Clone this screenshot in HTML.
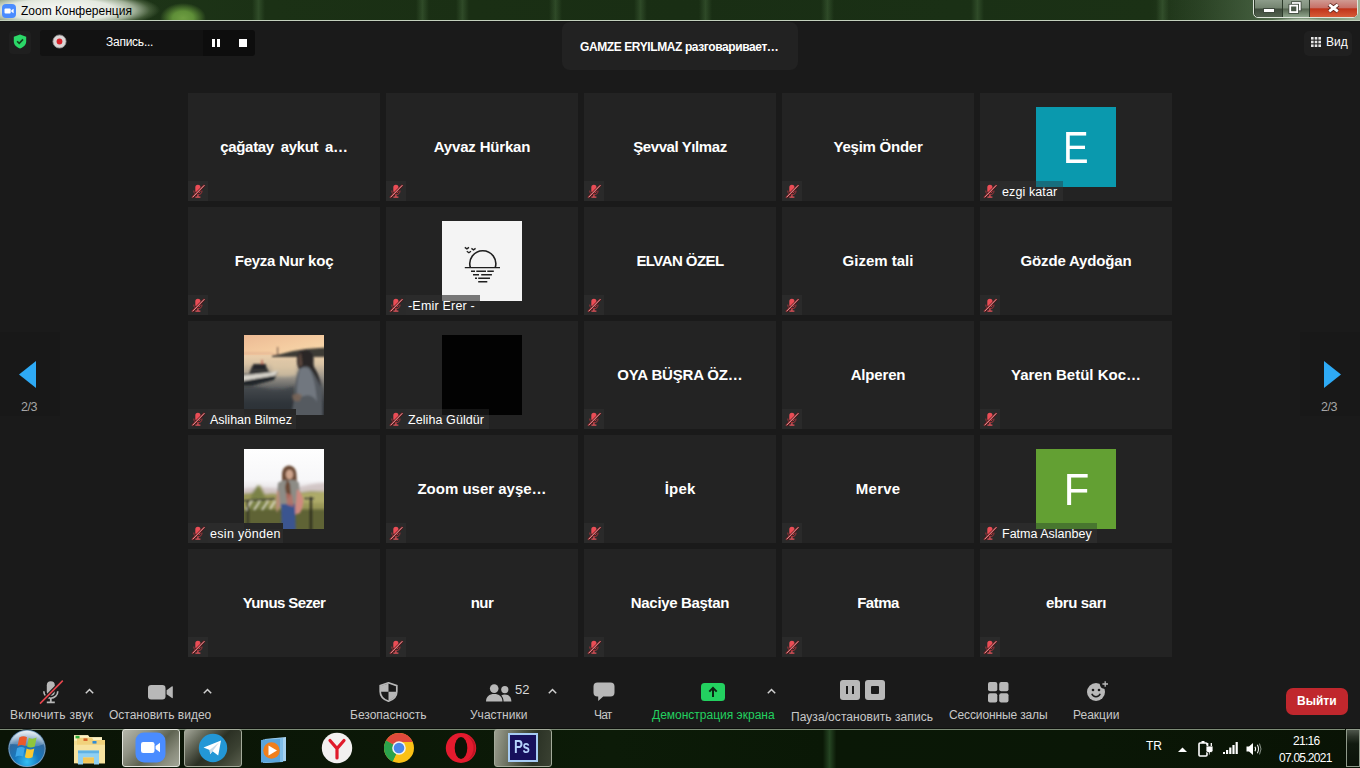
<!DOCTYPE html>
<html lang="ru">
<head>
<meta charset="utf-8">
<title>Zoom Конференция</title>
<style>
*{box-sizing:border-box;margin:0;padding:0}
html,body{width:1360px;height:768px;overflow:hidden;background:#1a1a1a;font-family:"Liberation Sans",sans-serif;color:#fff}
#root{position:relative;width:1360px;height:768px;overflow:hidden;background:#1a1a1a}
.abs{position:absolute}
/* title bar */
#titlebar{position:absolute;left:0;top:0;width:1360px;height:22px;overflow:hidden;background:linear-gradient(90deg,#20371a 0,#1d3417 10%,#1b3115 20%,#1a2f14 35%,#192e14 50%,#1a3015 70%,#1b3115 85%,#1d3417 100%)}
#titlebar:after{content:"";position:absolute;left:0;top:20px;width:1360px;height:1px;background:#c3d0bd}
#titlebar .btm{position:absolute;left:0;top:21px;width:1360px;height:1px;background:#141514}
.stk{position:absolute;top:0;width:13px;height:20px;margin-left:-3px;background:linear-gradient(90deg,rgba(90,130,80,0),rgba(90,130,80,.32),rgba(90,130,80,0))}
.wb{top:0;height:17px}
#ttext{position:absolute;left:21px;top:3px;font-size:12px;color:#000;line-height:16px;white-space:nowrap}
/* tiles */
.tile{position:absolute;width:192px;height:108px;background:#232323;overflow:hidden}
.tile .nm{position:absolute;left:0;top:0;width:192px;height:108px;line-height:108px;text-align:center;font-weight:bold;font-size:15px;color:#fff;white-space:nowrap}
.tile .mic{position:absolute;left:0;top:88px;width:20px;height:20px;background:#2a2a2a}
.tile .lbl{position:absolute;left:0;top:88px;height:20px;background:#2b2b2b;padding-left:22px;font-size:12.5px;line-height:22.500px;color:#fff;white-space:nowrap;overflow:hidden}
.tile .lbl i{position:absolute;top:0;height:6px;display:block}
.tile .lbl span{position:relative}
.tile .av{position:absolute;left:56px;top:14px;width:80px;height:80px;overflow:hidden}
.pg{font-size:12.5px;letter-spacing:-.4px;line-height:13px;color:#a6a6a6;white-space:nowrap}
/* toolbar */
.tb{position:absolute;font-size:12px;color:#c8c8c8;white-space:nowrap;line-height:14px;top:708px}
.chev{position:absolute;width:9px;height:6px}
/* taskbar */
#taskbar{position:absolute;left:0;top:728px;width:1360px;height:40px;overflow:hidden;background:linear-gradient(90deg,#0a1406 0,#0b1807 30%,#0c1b08 45%,#0a1806 60.500%,#254422 61%,#0a1806 61.500%,#0a1706 80%,#091305 100%)}
#taskbar:before{content:"";position:absolute;left:0;top:1px;width:1360px;height:1px;background:#7d8c77}
#taskbar:after{content:"";position:absolute;left:0;top:0;width:1360px;height:1px;background:#0d0f0c}
</style>
</head>
<body>
<div id="root">

<!-- TITLEBAR -->
<div id="titlebar">
<div class="abs" style="left:0;top:0;width:1360px;height:20px;background:linear-gradient(90deg,rgba(60,90,40,0) 0,rgba(60,90,40,0) 1150px,rgba(95,125,90,.22) 1200px,rgba(110,140,105,.42) 1250px,rgba(150,178,145,.75) 1320px,rgba(170,195,165,.9) 1360px)"></div>
<div class="stk" style="left:255px"></div><div class="stk" style="left:419px"></div><div class="stk" style="left:459px"></div><div class="stk" style="left:552px"></div><div class="stk" style="left:637px"></div><div class="stk" style="left:702px"></div><div class="stk" style="left:824px"></div><div class="stk" style="left:974px"></div><div class="stk" style="left:1159px"></div>
<div class="abs" style="left:160px;top:3px;width:46px;height:30px;background:radial-gradient(ellipse closest-side at 50% 50%,#6f9e42 0,#5f8f38 45%,rgba(50,85,35,0) 100%)"></div>
<div class="abs" style="left:-40px;top:-10px;width:200px;height:40px;background:radial-gradient(ellipse closest-side at 50% 50%,rgba(255,255,255,.97) 0,rgba(244,248,240,.92) 55%,rgba(215,228,205,.7) 75%,rgba(150,175,130,.3) 90%,rgba(120,150,100,0) 100%)"></div>
<svg class="abs" style="left:2px;top:4px" width="14" height="14" viewBox="0 0 14 14"><rect width="14" height="14" rx="4" fill="#4a8cff"/><rect x="2.500" y="4.500" width="6.200" height="5" rx="1" fill="#fff"/><path d="M9.300 6.300l2.300-1.600v4.600L9.300 7.700z" fill="#fff"/></svg>
<div id="ttext">Zoom Конференция</div>
<!-- window buttons -->
<div class="abs" style="left:1253px;top:-1px;width:105px;height:19px;border:1px solid #dfe6dc;border-radius:0 0 5px 5px;background:#2c3a2a"></div>
<div class="abs wb" style="left:1255px;width:27px;border-radius:0 0 0 4px;background:linear-gradient(#8d9c8a 0,#73836f 48%,#3f4c3d 52%,#53624f 100%)"></div>
<div class="abs wb" style="left:1283px;width:26px;background:linear-gradient(#93a290 0,#7d8d7a 48%,#55644f 52%,#8fa58c 100%)"></div>
<div class="abs wb" style="left:1310px;width:47px;border-radius:0 0 4px 0;background:linear-gradient(#d09a92 0,#c77168 45%,#c0341a 52%,#d65c38 100%)"></div>
<div class="abs" style="left:1263px;top:8px;width:12px;height:5px;background:#fff;border:1px solid #3f4a3e"></div>
<svg class="abs" style="left:1288px;top:1px" width="14" height="13" viewBox="0 0 14 13" fill="none"><rect x="4.800" y="2" width="7" height="6.500" stroke="#3c473b" stroke-width="3.400"/><rect x="4.800" y="2" width="7" height="6.500" stroke="#fff" stroke-width="1.800"/><rect x="2.200" y="4.600" width="7" height="6.500" fill="#73836f" stroke="#3c473b" stroke-width="3.400"/><rect x="2.200" y="4.600" width="7" height="6.500" fill="#4a5848" stroke="#fff" stroke-width="1.800"/></svg>
<svg class="abs" style="left:1326px;top:2px" width="15" height="12" viewBox="0 0 15 12"><path d="M3 2.500L12 9.500M12 2.500L3 9.500" stroke="#5a2018" stroke-width="4.400"/><path d="M3.200 2.700L11.800 9.300M11.800 2.700L3.200 9.300" stroke="#fff" stroke-width="2.800"/></svg>
<div class="abs" style="left:1270px;top:18px;width:60px;height:5px;background:radial-gradient(ellipse closest-side,rgba(235,245,232,.9),rgba(200,225,195,0))"></div>
<div class="btm"></div>
</div>

<!-- TOPBAR -->
<div id="topbar">
<!-- shield -->
<div class="abs" style="left:9px;top:31px;width:22px;height:23px;background:#1f1f1f;border-radius:4px"></div>
<svg class="abs" style="left:13px;top:34px" width="14" height="15" viewBox="0 0 14 15"><path d="M7 .4L13.200 2.800v4.400c0 3.400-2.500 6-6.200 7.300C3.300 13.200 .8 10.600 .8 7.200V2.800z" fill="#2bd868"/><path d="M4.100 7.300l2.100 2.100 3.800-4" fill="none" stroke="#15401f" stroke-width="1.600"/></svg>
<!-- recording box -->
<div class="abs" style="left:40px;top:30px;width:163px;height:26px;background:#121212;border-radius:3px 0 0 3px"></div>
<div class="abs" style="left:203px;top:30px;width:52px;height:26px;background:#0d0d0d;border-radius:0 3px 3px 0"></div>
<svg class="abs" style="left:52px;top:34px" width="15" height="15" viewBox="0 0 15 15"><circle cx="7.500" cy="7.500" r="6.600" fill="#d9d6d6"/><circle cx="7.500" cy="7.500" r="6.600" fill="none" stroke="#8e8a8a" stroke-width=".8"/><circle cx="7.500" cy="7.500" r="2.900" fill="#d8222a"/></svg>
<div class="abs" id="rectxt" style="left:106px;top:35px;letter-spacing:-.25px;font-size:12px;line-height:14px;color:#fff;white-space:nowrap">Запись...</div>
<div class="abs" style="left:212px;top:39px;width:3px;height:8px;background:#fff"></div>
<div class="abs" style="left:217px;top:39px;width:3px;height:8px;background:#fff"></div>
<div class="abs" style="left:239px;top:39px;width:8px;height:8px;background:#fff"></div>
<!-- speaker -->
<div class="abs" style="left:562px;top:22px;width:236px;height:48px;background:#222;border-radius:8px"></div>
<div class="abs" id="spk" style="left:580px;top:40px;letter-spacing:-.4px;font-size:12px;font-weight:bold;line-height:14px;color:#fff;white-space:nowrap">GAMZE ERYILMAZ разговаривает…</div>
<!-- view -->
<div class="abs" style="left:1304px;top:31px;width:48px;height:25px;background:#202020;border-radius:5px"></div>
<svg class="abs" style="left:1311px;top:37px" width="10" height="10" viewBox="0 0 10 10" fill="#e6e6e6"><rect x="0" y="0" width="2.600" height="2.600"/><rect x="3.700" y="0" width="2.600" height="2.600"/><rect x="7.400" y="0" width="2.600" height="2.600"/><rect x="0" y="3.700" width="2.600" height="2.600"/><rect x="3.700" y="3.700" width="2.600" height="2.600"/><rect x="7.400" y="3.700" width="2.600" height="2.600"/><rect x="0" y="7.400" width="2.600" height="2.600"/><rect x="3.700" y="7.400" width="2.600" height="2.600"/><rect x="7.400" y="7.400" width="2.600" height="2.600"/></svg>
<div class="abs" id="vid" style="left:1326px;top:35px;font-size:12px;line-height:14px;color:#fff;white-space:nowrap">Вид</div>
<!-- page arrows -->
<div class="abs" style="left:0;top:332px;width:60px;height:84px;background:#181818"></div>
<svg class="abs" style="left:19px;top:361px" width="17" height="27" viewBox="0 0 17 27"><path d="M0 13.500L17 0V27z" fill="#2eaaf5"/></svg>
<div class="abs pg" style="left:21px;top:401px">2/3</div>
<div class="abs" style="left:1300px;top:332px;width:60px;height:84px;background:#181818"></div>
<svg class="abs" style="left:1324px;top:361px" width="17" height="27" viewBox="0 0 17 27"><path d="M17 13.500L0 0V27z" fill="#2eaaf5"/></svg>
<div class="abs pg" style="left:1321px;top:401px">2/3</div>
</div>

<!-- GRID -->
<div id="grid">
<div class="tile" style="left:188px;top:93px"><div class="nm" style="letter-spacing:-.33px;word-spacing:3px">çağatay aykut a…</div><svg class="mic" viewBox="0 0 20 20"><rect x="7.300" y="3.800" width="5.200" height="8.400" rx="2.600" fill="#ea4d56"/><path d="M5.800 9.600a4.100 4.100 0 0 0 8.200 0" fill="none" stroke="#a8353c" stroke-width="1"/><path d="M9.900 13.700v2M7.400 16.100h5" stroke="#e2525a" stroke-width="1.200" fill="none"/><path d="M4.200 16.600L16.600 4" stroke="#6a1216" stroke-width="2.300"/><path d="M4.400 16.400L16.400 4.200" stroke="#f2aeb1" stroke-width="1"/></svg></div>
<div class="tile" style="left:386px;top:93px"><div class="nm" style="letter-spacing:-0.18px;padding-left:-0.18px">Ayvaz Hürkan</div><svg class="mic" viewBox="0 0 20 20"><rect x="7.300" y="3.800" width="5.200" height="8.400" rx="2.600" fill="#ea4d56"/><path d="M5.800 9.600a4.100 4.100 0 0 0 8.200 0" fill="none" stroke="#a8353c" stroke-width="1"/><path d="M9.900 13.700v2M7.400 16.100h5" stroke="#e2525a" stroke-width="1.200" fill="none"/><path d="M4.200 16.600L16.600 4" stroke="#6a1216" stroke-width="2.300"/><path d="M4.400 16.400L16.400 4.200" stroke="#f2aeb1" stroke-width="1"/></svg></div>
<div class="tile" style="left:584px;top:93px"><div class="nm" style="letter-spacing:-0.42px;padding-left:-0.42px">Şevval Yılmaz</div><svg class="mic" viewBox="0 0 20 20"><rect x="7.300" y="3.800" width="5.200" height="8.400" rx="2.600" fill="#ea4d56"/><path d="M5.800 9.600a4.100 4.100 0 0 0 8.200 0" fill="none" stroke="#a8353c" stroke-width="1"/><path d="M9.900 13.700v2M7.400 16.100h5" stroke="#e2525a" stroke-width="1.200" fill="none"/><path d="M4.200 16.600L16.600 4" stroke="#6a1216" stroke-width="2.300"/><path d="M4.400 16.400L16.400 4.200" stroke="#f2aeb1" stroke-width="1"/></svg></div>
<div class="tile" style="left:782px;top:93px"><div class="nm" style="letter-spacing:-0.25px;padding-left:-0.25px">Yeşim Önder</div><svg class="mic" viewBox="0 0 20 20"><rect x="7.300" y="3.800" width="5.200" height="8.400" rx="2.600" fill="#ea4d56"/><path d="M5.800 9.600a4.100 4.100 0 0 0 8.200 0" fill="none" stroke="#a8353c" stroke-width="1"/><path d="M9.900 13.700v2M7.400 16.100h5" stroke="#e2525a" stroke-width="1.200" fill="none"/><path d="M4.200 16.600L16.600 4" stroke="#6a1216" stroke-width="2.300"/><path d="M4.400 16.400L16.400 4.200" stroke="#f2aeb1" stroke-width="1"/></svg></div>
<div class="tile" style="left:980px;top:93px"><div class="av avE"><div style="width:80px;height:80px;background:#0a99ae;color:#fff;font-size:44px;line-height:82px;text-align:center"><span style="display:inline-block;transform:scaleX(.87)">E</span></div></div><div class="lbl" style="width:83px;letter-spacing:0.1px"><i style="left:56px;width:27px;background:#176e7d"></i><span>ezgi katar</span></div><svg class="mic" viewBox="0 0 20 20"><rect x="7.300" y="3.800" width="5.200" height="8.400" rx="2.600" fill="#ea4d56"/><path d="M5.800 9.600a4.100 4.100 0 0 0 8.200 0" fill="none" stroke="#a8353c" stroke-width="1"/><path d="M9.900 13.700v2M7.400 16.100h5" stroke="#e2525a" stroke-width="1.200" fill="none"/><path d="M4.200 16.600L16.600 4" stroke="#6a1216" stroke-width="2.300"/><path d="M4.400 16.400L16.400 4.200" stroke="#f2aeb1" stroke-width="1"/></svg></div>
<div class="tile" style="left:188px;top:207px"><div class="nm" style="letter-spacing:-0.25px;padding-left:-0.25px">Feyza Nur koç</div><svg class="mic" viewBox="0 0 20 20"><rect x="7.300" y="3.800" width="5.200" height="8.400" rx="2.600" fill="#ea4d56"/><path d="M5.800 9.600a4.100 4.100 0 0 0 8.200 0" fill="none" stroke="#a8353c" stroke-width="1"/><path d="M9.900 13.700v2M7.400 16.100h5" stroke="#e2525a" stroke-width="1.200" fill="none"/><path d="M4.200 16.600L16.600 4" stroke="#6a1216" stroke-width="2.300"/><path d="M4.400 16.400L16.400 4.200" stroke="#f2aeb1" stroke-width="1"/></svg></div>
<div class="tile" style="left:386px;top:207px"><div class="av avSUN"><svg width="80" height="80" viewBox="0 0 80 80"><rect width="80" height="80" fill="#f4f4f4"/><g fill="none" stroke="#1f1f1f" stroke-width="1.600"><path d="M28.400 46.600A13 13 0 1 1 53.200 46.600"/><path d="M22.800 46.600h35.200" stroke-width="1.400"/><path d="M29 50.200h4M34.300 50.200h9.700M45.300 50.200h6.500M31 53.800h6M39.200 53.800h10.700M33 57.200h2M36.200 57.200h11.800M36.200 60.700h9.100" stroke-width="1.400"/><path d="M22.800 26.400l2.100 1.500 2.100-1.500M29.400 27.400l2.100 1.500 2.100-1.500M24.800 30.300l2.100 1.500 2.100-1.500" stroke-width="1.300"/></g></svg></div><div class="lbl" style="width:94px;letter-spacing:0.2px"><i style="left:56px;width:38px;background:#777777"></i><span>-Emir Erer -</span></div><svg class="mic" viewBox="0 0 20 20"><rect x="7.300" y="3.800" width="5.200" height="8.400" rx="2.600" fill="#ea4d56"/><path d="M5.800 9.600a4.100 4.100 0 0 0 8.200 0" fill="none" stroke="#a8353c" stroke-width="1"/><path d="M9.900 13.700v2M7.400 16.100h5" stroke="#e2525a" stroke-width="1.200" fill="none"/><path d="M4.200 16.600L16.600 4" stroke="#6a1216" stroke-width="2.300"/><path d="M4.400 16.400L16.400 4.200" stroke="#f2aeb1" stroke-width="1"/></svg></div>
<div class="tile" style="left:584px;top:207px"><div class="nm" style="letter-spacing:-0.56px;padding-left:-0.56px">ELVAN ÖZEL</div><svg class="mic" viewBox="0 0 20 20"><rect x="7.300" y="3.800" width="5.200" height="8.400" rx="2.600" fill="#ea4d56"/><path d="M5.800 9.600a4.100 4.100 0 0 0 8.200 0" fill="none" stroke="#a8353c" stroke-width="1"/><path d="M9.900 13.700v2M7.400 16.100h5" stroke="#e2525a" stroke-width="1.200" fill="none"/><path d="M4.200 16.600L16.600 4" stroke="#6a1216" stroke-width="2.300"/><path d="M4.400 16.400L16.400 4.200" stroke="#f2aeb1" stroke-width="1"/></svg></div>
<div class="tile" style="left:782px;top:207px"><div class="nm">Gizem tali</div><svg class="mic" viewBox="0 0 20 20"><rect x="7.300" y="3.800" width="5.200" height="8.400" rx="2.600" fill="#ea4d56"/><path d="M5.800 9.600a4.100 4.100 0 0 0 8.200 0" fill="none" stroke="#a8353c" stroke-width="1"/><path d="M9.900 13.700v2M7.400 16.100h5" stroke="#e2525a" stroke-width="1.200" fill="none"/><path d="M4.200 16.600L16.600 4" stroke="#6a1216" stroke-width="2.300"/><path d="M4.400 16.400L16.400 4.200" stroke="#f2aeb1" stroke-width="1"/></svg></div>
<div class="tile" style="left:980px;top:207px"><div class="nm" style="letter-spacing:-0.17px;padding-left:-0.17px">Gözde Aydoğan</div><svg class="mic" viewBox="0 0 20 20"><rect x="7.300" y="3.800" width="5.200" height="8.400" rx="2.600" fill="#ea4d56"/><path d="M5.800 9.600a4.100 4.100 0 0 0 8.200 0" fill="none" stroke="#a8353c" stroke-width="1"/><path d="M9.900 13.700v2M7.400 16.100h5" stroke="#e2525a" stroke-width="1.200" fill="none"/><path d="M4.200 16.600L16.600 4" stroke="#6a1216" stroke-width="2.300"/><path d="M4.400 16.400L16.400 4.200" stroke="#f2aeb1" stroke-width="1"/></svg></div>
<div class="tile" style="left:188px;top:321px"><div class="av avP1"><svg width="80" height="80" viewBox="0 0 80 80"><defs><linearGradient id="p1s" x1="0" y1="0" x2="1" y2="1"><stop offset="0" stop-color="#ecba94"/><stop offset=".5" stop-color="#f4cba0"/><stop offset="1" stop-color="#f8dcae"/></linearGradient><linearGradient id="p1w" x1="0" y1="0" x2="0" y2="1"><stop offset="0" stop-color="#ecd0ac"/><stop offset=".15" stop-color="#d8c2a4"/><stop offset=".36" stop-color="#9b958a"/><stop offset=".56" stop-color="#5b5d5f"/><stop offset=".8" stop-color="#34383d"/><stop offset="1" stop-color="#2a2e32"/></linearGradient><filter id="b1" x="-20%" y="-20%" width="140%" height="140%"><feGaussianBlur stdDeviation=".8"/></filter><filter id="b2" x="-20%" y="-20%" width="140%" height="140%"><feGaussianBlur stdDeviation="1.600"/></filter></defs>
<rect width="80" height="21" fill="url(#p1s)"/><rect y="20" width="80" height="60" fill="url(#p1w)"/>
<g filter="url(#b2)"><path d="M-10 52q14-3 30 1t30-2v40H-10z" fill="#2e3338" opacity=".5"/><path d="M28 28q12 2 24 0v12q-12 3-24 0z" fill="#e4cca8" opacity=".55"/></g>
<g filter="url(#b1)"><path d="M-8 17.500h34l10 1.800H-8z" fill="#d9a58a" opacity=".7"/><path d="M28 20.500l8-1.200 12-3 14-2.300 28-2v10H28z" fill="#3d3a36"/><rect x="33" y="12" width="1.200" height="8.500" fill="#7a5f50"/>
<path d="M-8 39h13l3-8h14l3 6h9l-3 5-24 5H-8z" fill="#343536"/><path d="M-8 41l34-3.500 8-2-2.500 5-23.500 5.500H-8z" fill="#d6d2c9"/><path d="M9 29h13v5H9z" fill="#262729"/><path d="M-8 47l40-6.500-2 4.500-22 6H-8z" fill="#23272b"/><rect x="17.500" y="25" width="1.200" height="4" fill="#b0443a"/>
<path d="M53 24c0-6 4-9 8.500-9s8 3 8 9c0 3-.5 5 .5 8 4 6 7 13 8 22l1 36H48c-1-12 1-20 3-30 0-8 .5-16 4-26-1.500-3-2-6-2-10z" fill="#555a61"/><path d="M53 24c0-6 4-9 8.500-9s8 3 8 9c0 3-.5 5 .5 8 3 5 6 11 7 20-4-8-7-14-12-20-4-2-7 1-10 2-1.500-3-2-6-2-10z" fill="#2a2725"/><path d="M56 34c3-2 7-2 10 1 4 8 6 18 7 32-3-6-8-8-13-6-4 2-6 0-7-4 0-9 1-15 3-23z" fill="#7d838b" opacity=".7"/><path d="M54.500 24c0-3 1-5 2.500-6l1.500 12-3 2q-1-4-1-8z" fill="#5c463c"/><path d="M48 60q6-3 10 0l-2 6q-4 1-7-1z" fill="#7d6658" opacity=".8"/></g></svg></div><div class="lbl" style="width:108px;letter-spacing:0px"><i style="left:56px;width:52px;background:rgba(38,38,38,.72)"></i><span>Aslihan Bilmez</span></div><svg class="mic" viewBox="0 0 20 20"><rect x="7.300" y="3.800" width="5.200" height="8.400" rx="2.600" fill="#ea4d56"/><path d="M5.800 9.600a4.100 4.100 0 0 0 8.200 0" fill="none" stroke="#a8353c" stroke-width="1"/><path d="M9.900 13.700v2M7.400 16.100h5" stroke="#e2525a" stroke-width="1.200" fill="none"/><path d="M4.200 16.600L16.600 4" stroke="#6a1216" stroke-width="2.300"/><path d="M4.400 16.400L16.400 4.200" stroke="#f2aeb1" stroke-width="1"/></svg></div>
<div class="tile" style="left:386px;top:321px"><div class="av avBLK"><div style="width:80px;height:80px;background:#020202"></div></div><div class="lbl" style="width:103px;letter-spacing:0.08px"><i style="left:56px;width:47px;background:#141414"></i><span>Zeliha Güldür</span></div><svg class="mic" viewBox="0 0 20 20"><rect x="7.300" y="3.800" width="5.200" height="8.400" rx="2.600" fill="#ea4d56"/><path d="M5.800 9.600a4.100 4.100 0 0 0 8.200 0" fill="none" stroke="#a8353c" stroke-width="1"/><path d="M9.900 13.700v2M7.400 16.100h5" stroke="#e2525a" stroke-width="1.200" fill="none"/><path d="M4.200 16.600L16.600 4" stroke="#6a1216" stroke-width="2.300"/><path d="M4.400 16.400L16.400 4.200" stroke="#f2aeb1" stroke-width="1"/></svg></div>
<div class="tile" style="left:584px;top:321px"><div class="nm" style="letter-spacing:-0.17px;padding-left:-0.17px">OYA BÜŞRA ÖZ…</div><svg class="mic" viewBox="0 0 20 20"><rect x="7.300" y="3.800" width="5.200" height="8.400" rx="2.600" fill="#ea4d56"/><path d="M5.800 9.600a4.100 4.100 0 0 0 8.200 0" fill="none" stroke="#a8353c" stroke-width="1"/><path d="M9.900 13.700v2M7.400 16.100h5" stroke="#e2525a" stroke-width="1.200" fill="none"/><path d="M4.200 16.600L16.600 4" stroke="#6a1216" stroke-width="2.300"/><path d="M4.400 16.400L16.400 4.200" stroke="#f2aeb1" stroke-width="1"/></svg></div>
<div class="tile" style="left:782px;top:321px"><div class="nm" style="letter-spacing:-0.17px;padding-left:-0.17px">Alperen</div><svg class="mic" viewBox="0 0 20 20"><rect x="7.300" y="3.800" width="5.200" height="8.400" rx="2.600" fill="#ea4d56"/><path d="M5.800 9.600a4.100 4.100 0 0 0 8.200 0" fill="none" stroke="#a8353c" stroke-width="1"/><path d="M9.900 13.700v2M7.400 16.100h5" stroke="#e2525a" stroke-width="1.200" fill="none"/><path d="M4.200 16.600L16.600 4" stroke="#6a1216" stroke-width="2.300"/><path d="M4.400 16.400L16.400 4.200" stroke="#f2aeb1" stroke-width="1"/></svg></div>
<div class="tile" style="left:980px;top:321px"><div class="nm">Yaren Betül Koc…</div><svg class="mic" viewBox="0 0 20 20"><rect x="7.300" y="3.800" width="5.200" height="8.400" rx="2.600" fill="#ea4d56"/><path d="M5.800 9.600a4.100 4.100 0 0 0 8.200 0" fill="none" stroke="#a8353c" stroke-width="1"/><path d="M9.900 13.700v2M7.400 16.100h5" stroke="#e2525a" stroke-width="1.200" fill="none"/><path d="M4.200 16.600L16.600 4" stroke="#6a1216" stroke-width="2.300"/><path d="M4.400 16.400L16.400 4.200" stroke="#f2aeb1" stroke-width="1"/></svg></div>
<div class="tile" style="left:188px;top:435px"><div class="av avP2"><svg width="80" height="80" viewBox="0 0 80 80"><defs><linearGradient id="p2s" x1="0" y1="0" x2="0" y2="1"><stop offset="0" stop-color="#fefefe"/><stop offset=".38" stop-color="#f7f7f9"/><stop offset=".5" stop-color="#e8e4e6"/></linearGradient><filter id="c1" x="-20%" y="-20%" width="140%" height="140%"><feGaussianBlur stdDeviation=".9"/></filter><filter id="c2" x="-20%" y="-20%" width="140%" height="140%"><feGaussianBlur stdDeviation="1.800"/></filter></defs>
<rect width="80" height="80" fill="url(#p2s)"/>
<g filter="url(#c2)"><path d="M-10 42q18-5 36-3t34-2 30-3v20H-10z" fill="#d2c6c6"/><path d="M-10 47q10-4 22-3l4-8 5 9q10-2 16 1l30-4 23 1v50H-10z" fill="#9a9858"/><path d="M-10 60h100v30H-10z" fill="#5f6436"/><path d="M52 45l38-3v12H52z" fill="#aeab69"/><path d="M8 44l6-8 6 10 6 14H4z" fill="#7a8246"/></g>
<g filter="url(#c1)"><path d="M-5 52l36-2" stroke="#3a3a34" stroke-width="1.400"/><path d="M2 61l6-9M10 61l6-9M18 61l6-9M26 60l5-8" stroke="#e9e6dc" stroke-width="1.700" opacity=".85"/><rect x="3" y="52" width="1.600" height="24" fill="#2c2c28"/><path d="M60 49.500h10" stroke="#3a3a34" stroke-width="1.300"/><rect x="66" y="48" width="1.800" height="40" fill="#1f1f1d"/>
<path d="M38 26c0-6 3-9.500 7-9.500s7.500 3.500 7.500 9.500c0 5 1 9 1 14l-4 8-8-4-3-6c-.5-4-.5-8-.5-12z" fill="#6b4a36"/><ellipse cx="45.500" cy="25.500" rx="3.600" ry="4.800" fill="#cfa58d"/><path d="M34 34q4-3 8-3l8 0q3 0 5 3l1 14-2 10H35l-2-12z" fill="#8d8c86"/><path d="M43 30l3 5 1 12-4 3-2-12z" fill="#6b4a36"/><path d="M53 40q5 4 6 10t-3 14l-6 2 2-12z" fill="#cf8a80"/><path d="M33 42l2 0 1 14-3 8q-2-8 0-22z" fill="#b98d78"/><path d="M37 55h14l1 35H38z" fill="#3b5590"/><path d="M42 44l6 2 2 12-7-2z" fill="#b86e64" opacity=".8"/></g></svg></div><div class="lbl" style="width:95px;letter-spacing:0.3px"><i style="left:56px;width:39px;background:rgba(38,38,38,.72)"></i><span>esin yönden</span></div><svg class="mic" viewBox="0 0 20 20"><rect x="7.300" y="3.800" width="5.200" height="8.400" rx="2.600" fill="#ea4d56"/><path d="M5.800 9.600a4.100 4.100 0 0 0 8.200 0" fill="none" stroke="#a8353c" stroke-width="1"/><path d="M9.900 13.700v2M7.400 16.100h5" stroke="#e2525a" stroke-width="1.200" fill="none"/><path d="M4.200 16.600L16.600 4" stroke="#6a1216" stroke-width="2.300"/><path d="M4.400 16.400L16.400 4.200" stroke="#f2aeb1" stroke-width="1"/></svg></div>
<div class="tile" style="left:386px;top:435px"><div class="nm">Zoom user ayşe…</div><svg class="mic" viewBox="0 0 20 20"><rect x="7.300" y="3.800" width="5.200" height="8.400" rx="2.600" fill="#ea4d56"/><path d="M5.800 9.600a4.100 4.100 0 0 0 8.200 0" fill="none" stroke="#a8353c" stroke-width="1"/><path d="M9.900 13.700v2M7.400 16.100h5" stroke="#e2525a" stroke-width="1.200" fill="none"/><path d="M4.200 16.600L16.600 4" stroke="#6a1216" stroke-width="2.300"/><path d="M4.400 16.400L16.400 4.200" stroke="#f2aeb1" stroke-width="1"/></svg></div>
<div class="tile" style="left:584px;top:435px"><div class="nm" style="letter-spacing:0.20px;padding-left:0.20px">İpek</div><svg class="mic" viewBox="0 0 20 20"><rect x="7.300" y="3.800" width="5.200" height="8.400" rx="2.600" fill="#ea4d56"/><path d="M5.800 9.600a4.100 4.100 0 0 0 8.200 0" fill="none" stroke="#a8353c" stroke-width="1"/><path d="M9.900 13.700v2M7.400 16.100h5" stroke="#e2525a" stroke-width="1.200" fill="none"/><path d="M4.200 16.600L16.600 4" stroke="#6a1216" stroke-width="2.300"/><path d="M4.400 16.400L16.400 4.200" stroke="#f2aeb1" stroke-width="1"/></svg></div>
<div class="tile" style="left:782px;top:435px"><div class="nm" style="letter-spacing:0.25px;padding-left:0.25px">Merve</div><svg class="mic" viewBox="0 0 20 20"><rect x="7.300" y="3.800" width="5.200" height="8.400" rx="2.600" fill="#ea4d56"/><path d="M5.800 9.600a4.100 4.100 0 0 0 8.200 0" fill="none" stroke="#a8353c" stroke-width="1"/><path d="M9.900 13.700v2M7.400 16.100h5" stroke="#e2525a" stroke-width="1.200" fill="none"/><path d="M4.200 16.600L16.600 4" stroke="#6a1216" stroke-width="2.300"/><path d="M4.400 16.400L16.400 4.200" stroke="#f2aeb1" stroke-width="1"/></svg></div>
<div class="tile" style="left:980px;top:435px"><div class="av avF"><div style="width:80px;height:80px;background:#63a033;color:#fff;font-size:44px;line-height:82px;text-align:center"><span style="display:inline-block;transform:scaleX(.95)">F</span></div></div><div class="lbl" style="width:117px;letter-spacing:0px"><i style="left:56px;width:61px;background:#48762f"></i><span>Fatma Aslanbey</span></div><svg class="mic" viewBox="0 0 20 20"><rect x="7.300" y="3.800" width="5.200" height="8.400" rx="2.600" fill="#ea4d56"/><path d="M5.800 9.600a4.100 4.100 0 0 0 8.200 0" fill="none" stroke="#a8353c" stroke-width="1"/><path d="M9.900 13.700v2M7.400 16.100h5" stroke="#e2525a" stroke-width="1.200" fill="none"/><path d="M4.200 16.600L16.600 4" stroke="#6a1216" stroke-width="2.300"/><path d="M4.400 16.400L16.400 4.200" stroke="#f2aeb1" stroke-width="1"/></svg></div>
<div class="tile" style="left:188px;top:549px"><div class="nm" style="letter-spacing:-0.60px;padding-left:-0.60px">Yunus Sezer</div><svg class="mic" viewBox="0 0 20 20"><rect x="7.300" y="3.800" width="5.200" height="8.400" rx="2.600" fill="#ea4d56"/><path d="M5.800 9.600a4.100 4.100 0 0 0 8.200 0" fill="none" stroke="#a8353c" stroke-width="1"/><path d="M9.900 13.700v2M7.400 16.100h5" stroke="#e2525a" stroke-width="1.200" fill="none"/><path d="M4.200 16.600L16.600 4" stroke="#6a1216" stroke-width="2.300"/><path d="M4.400 16.400L16.400 4.200" stroke="#f2aeb1" stroke-width="1"/></svg></div>
<div class="tile" style="left:386px;top:549px"><div class="nm" style="letter-spacing:-0.50px;padding-left:-0.50px">nur</div><svg class="mic" viewBox="0 0 20 20"><rect x="7.300" y="3.800" width="5.200" height="8.400" rx="2.600" fill="#ea4d56"/><path d="M5.800 9.600a4.100 4.100 0 0 0 8.200 0" fill="none" stroke="#a8353c" stroke-width="1"/><path d="M9.900 13.700v2M7.400 16.100h5" stroke="#e2525a" stroke-width="1.200" fill="none"/><path d="M4.200 16.600L16.600 4" stroke="#6a1216" stroke-width="2.300"/><path d="M4.400 16.400L16.400 4.200" stroke="#f2aeb1" stroke-width="1"/></svg></div>
<div class="tile" style="left:584px;top:549px"><div class="nm" style="letter-spacing:-0.33px;padding-left:-0.33px">Naciye Baştan</div><svg class="mic" viewBox="0 0 20 20"><rect x="7.300" y="3.800" width="5.200" height="8.400" rx="2.600" fill="#ea4d56"/><path d="M5.800 9.600a4.100 4.100 0 0 0 8.200 0" fill="none" stroke="#a8353c" stroke-width="1"/><path d="M9.900 13.700v2M7.400 16.100h5" stroke="#e2525a" stroke-width="1.200" fill="none"/><path d="M4.200 16.600L16.600 4" stroke="#6a1216" stroke-width="2.300"/><path d="M4.400 16.400L16.400 4.200" stroke="#f2aeb1" stroke-width="1"/></svg></div>
<div class="tile" style="left:782px;top:549px"><div class="nm" style="letter-spacing:-0.50px;padding-left:-0.50px">Fatma</div><svg class="mic" viewBox="0 0 20 20"><rect x="7.300" y="3.800" width="5.200" height="8.400" rx="2.600" fill="#ea4d56"/><path d="M5.800 9.600a4.100 4.100 0 0 0 8.200 0" fill="none" stroke="#a8353c" stroke-width="1"/><path d="M9.900 13.700v2M7.400 16.100h5" stroke="#e2525a" stroke-width="1.200" fill="none"/><path d="M4.200 16.600L16.600 4" stroke="#6a1216" stroke-width="2.300"/><path d="M4.400 16.400L16.400 4.200" stroke="#f2aeb1" stroke-width="1"/></svg></div>
<div class="tile" style="left:980px;top:549px"><div class="nm" style="letter-spacing:-0.38px;padding-left:-0.38px">ebru sarı</div><svg class="mic" viewBox="0 0 20 20"><rect x="7.300" y="3.800" width="5.200" height="8.400" rx="2.600" fill="#ea4d56"/><path d="M5.800 9.600a4.100 4.100 0 0 0 8.200 0" fill="none" stroke="#a8353c" stroke-width="1"/><path d="M9.900 13.700v2M7.400 16.100h5" stroke="#e2525a" stroke-width="1.200" fill="none"/><path d="M4.200 16.600L16.600 4" stroke="#6a1216" stroke-width="2.300"/><path d="M4.400 16.400L16.400 4.200" stroke="#f2aeb1" stroke-width="1"/></svg></div>
</div>

<!-- TOOLBAR -->
<div id="toolbar">
<!-- mic -->
<svg class="abs" style="left:38px;top:678px" width="27" height="28" viewBox="0 0 27 28"><rect x="8.800" y="3.200" width="8" height="14.500" rx="4" fill="#b8b8b8"/><path d="M5.800 13.200a7 7 0 0 0 14 0" fill="none" stroke="#b8b8b8" stroke-width="1.600"/><path d="M12.800 20.200v3.300M8.800 24.300h8" stroke="#b8b8b8" stroke-width="1.800" fill="none"/><path d="M2 25.600L24.800 2.600" stroke="#1a1a1a" stroke-width="4"/><path d="M2 25.600L24.800 2.600" stroke="#e8474f" stroke-width="1.500"/></svg>
<svg class="abs" style="left:85px;top:688px" width="9" height="6" viewBox="0 0 9 6"><path d="M.8 5.200L4.500 1.500 8.200 5.200" fill="none" stroke="#d0d0d0" stroke-width="1.500"/></svg>
<div class="tb" id="t1" style="left:10px;letter-spacing:.25px">Включить звук</div>
<!-- video -->
<svg class="abs" style="left:148px;top:685px" width="25" height="15" viewBox="0 0 25 15"><rect x="0" y="0" width="17.500" height="14.400" rx="3.200" fill="#b8b8b8"/><path d="M18.600 5.200L24 1.300q.8-.5.800.6V12.500q0 1.100-.8.600L18.600 9.200z" fill="#b8b8b8"/></svg>
<svg class="abs" style="left:203px;top:688px" width="9" height="6" viewBox="0 0 9 6"><path d="M.8 5.200L4.500 1.500 8.200 5.200" fill="none" stroke="#d0d0d0" stroke-width="1.500"/></svg>
<div class="tb" id="t2" style="left:109px">Остановить видео</div>
<!-- security -->
<svg class="abs" style="left:379px;top:682px" width="19" height="20" viewBox="0 0 19 20"><path d="M9.500 .8L17.800 3.600V9.500c0 4.600-3.400 8.100-8.300 9.700C4.600 17.600 1.200 14.100 1.200 9.500V3.600z" fill="none" stroke="#b8b8b8" stroke-width="1.700"/><path d="M9.500 1.500V9.800H1.600V4z" fill="#b8b8b8"/><path d="M9.500 9.800h7.900c0 4-3 7.200-7.900 8.900z" fill="#b8b8b8"/></svg>
<div class="tb" id="t3" style="left:350px">Безопасность</div>
<!-- participants -->
<svg class="abs" style="left:486px;top:684px" width="26" height="18" viewBox="0 0 26 18" fill="#b8b8b8"><circle cx="8.200" cy="4.600" r="4.300"/><path d="M0 17.500c0-5 3.300-7.600 8.200-7.600s8.200 2.600 8.200 7.600z"/><circle cx="18.800" cy="5.600" r="3.600"/><path d="M17.600 17.500c0-2.800-.9-4.700-2.300-6.100 1-.6 2.200-.9 3.500-.9 4 0 6.600 2.400 6.600 7z"/></svg>
<div class="abs" id="t52" style="left:515px;top:682px;font-size:13px;line-height:15px;color:#d8d8d8">52</div>
<svg class="abs" style="left:548px;top:688px" width="9" height="6" viewBox="0 0 9 6"><path d="M.8 5.200L4.500 1.500 8.200 5.200" fill="none" stroke="#d0d0d0" stroke-width="1.500"/></svg>
<div class="tb" id="t4" style="left:470px">Участники</div>
<!-- chat -->
<svg class="abs" style="left:593px;top:682px" width="22" height="20" viewBox="0 0 22 20"><path d="M4.500 .6h13a4 4 0 0 1 4 4v5.800a4 4 0 0 1-4 4H10.200L5.200 19V14.400H4.500a4 4 0 0 1-4-4V4.600a4 4 0 0 1 4-4z" fill="#b8b8b8"/></svg>
<div class="tb" id="t5" style="left:594px;letter-spacing:-.8px">Чат</div>
<!-- share -->
<div class="abs" style="left:701px;top:683px;width:24px;height:18px;border-radius:3.500px;background:#23d160"></div>
<svg class="abs" style="left:707px;top:686px" width="12" height="12" viewBox="0 0 12 12"><path d="M6 11V2.200M2.300 5.600L6 1.900 9.700 5.600" fill="none" stroke="#0c2413" stroke-width="2"/></svg>
<svg class="abs" style="left:767px;top:688px" width="9" height="6" viewBox="0 0 9 6"><path d="M.8 5.200L4.500 1.500 8.200 5.200" fill="none" stroke="#d0d0d0" stroke-width="1.500"/></svg>
<div class="tb" id="t6" style="left:652px;color:#23d160">Демонстрация экрана</div>
<!-- pause/stop record -->
<div class="abs" style="left:840px;top:680px;width:20px;height:20px;border-radius:3px;background:#b8b8b8"></div>
<div class="abs" style="left:846px;top:686px;width:2px;height:8px;background:#1a1a1a"></div>
<div class="abs" style="left:852px;top:686px;width:2px;height:8px;background:#1a1a1a"></div>
<div class="abs" style="left:865px;top:680px;width:20px;height:20px;border-radius:3px;background:#b8b8b8"></div>
<div class="abs" style="left:871px;top:686px;width:8px;height:8px;border-radius:1px;background:#1a1a1a"></div>
<div class="tb" id="t7" style="left:791px;top:710px;letter-spacing:.07px">Пауза/остановить запись</div>
<!-- breakout -->
<svg class="abs" style="left:988px;top:682px" width="21" height="21" viewBox="0 0 21 21" fill="#b8b8b8"><rect x="0" y="0" width="9.300" height="9.300" rx="2"/><rect x="11.200" y="0" width="9.300" height="9.300" rx="2"/><rect x="0" y="11.200" width="9.300" height="9.300" rx="2"/><rect x="11.200" y="11.200" width="9.300" height="9.300" rx="2"/></svg>
<div class="tb" id="t8" style="left:949px;letter-spacing:-.13px">Сессионные залы</div>
<!-- reactions -->
<svg class="abs" style="left:1086px;top:680px" width="23" height="22" viewBox="0 0 23 22"><circle cx="10" cy="12" r="9" fill="#b8b8b8"/><circle cx="18.500" cy="4.200" r="4.600" fill="#1a1a1a"/><path d="M19.200 1.200v5.600M16.400 4h5.600" stroke="#b8b8b8" stroke-width="1.300"/><circle cx="7" cy="10" r="1.300" fill="#1a1a1a"/><circle cx="13" cy="10" r="1.300" fill="#1a1a1a"/><path d="M5.800 13.800a4.500 4.500 0 0 0 8.400 0" fill="none" stroke="#1a1a1a" stroke-width="1.500"/></svg>
<div class="tb" id="t9" style="left:1073px">Реакции</div>
<!-- leave -->
<div class="abs" style="left:1286px;top:688px;width:62px;height:27px;border-radius:7px;background:#c0272d"></div>
<div class="abs" id="t10" style="left:1297px;top:694px;font-size:12px;font-weight:bold;line-height:15px;color:#fff;white-space:nowrap">Выйти</div>
</div>

<!-- TASKBAR -->
<div id="taskbar">
<!-- start orb -->
<svg class="abs" style="left:6px;top:0px" width="42" height="40" viewBox="0 0 42 40">
<defs><radialGradient id="orb" cx="50%" cy="88%" r="85%"><stop offset="0" stop-color="#35c0f5"/><stop offset=".4" stop-color="#1778bf"/><stop offset=".75" stop-color="#2f6aa0"/><stop offset="1" stop-color="#8fb0cc"/></radialGradient>
<linearGradient id="orbh" x1="0" y1="0" x2="0" y2="1"><stop offset="0" stop-color="#fff" stop-opacity=".8"/><stop offset="1" stop-color="#fff" stop-opacity=".15"/></linearGradient></defs>
<circle cx="21" cy="20.500" r="19.200" fill="#0c1f2c"/><circle cx="21" cy="20.500" r="18.600" fill="#7fa6c4"/><circle cx="21" cy="20.500" r="17.700" fill="url(#orb)"/>
<path d="M4 16a17.500 17.500 0 0 1 34 0q-8 4-17 2T4 16z" fill="url(#orbh)"/>
<path d="M13.300 9.500q4-2.300 7.700-.3l-1.700 8.700q-3.800-1.900-7.800.3z" fill="#ea5a2c"/>
<path d="M22.800 9.800q3.800 2 7.800-.2l-1.800 8.800q-4 2.100-7.700.1z" fill="#8ec63c"/>
<path d="M11 20.200q4-2.200 7.800-.3l-1.800 8.700q-3.700-1.900-7.700.3z" fill="#3ca6e8"/>
<path d="M20.600 20.500q3.800 2 7.700-.1l-1.800 8.800q-3.900 2.100-7.600.1z" fill="#fac832"/>
</svg>
<!-- explorer -->
<svg class="abs" style="left:72px;top:4px" width="35" height="34" viewBox="0 0 35 32" preserveAspectRatio="none">
<path d="M2 3h14l1.500 2H30v22H2z" fill="#f3dd92"/><path d="M2 3h14l1.500 2H30v3H2z" fill="#fbf1c6"/>
<path d="M5 5.500h15l1.500 2H33v22H5z" fill="#f1d27c"/><path d="M2 12h31v17.500H2z" fill="#f7e3a0"/>
<rect x="3.500" y="3.600" width="4" height="2.400" fill="#2fae3c"/><rect x="11.500" y="6" width="4" height="2.400" fill="#d4602a"/><rect x="20.500" y="8.500" width="4" height="2.400" fill="#2f8bd6"/>
<path d="M6 17.500h21V30.500h-5v-6.500h-11V30.500h-5z" fill="#8fd0f2"/><path d="M6 17.500h21v2.500H6z" fill="#5fb2e4"/><path d="M11 24h11v5H11z" fill="#f2c657"/>
</svg>
<!-- zoom button -->
<div class="abs" style="left:122px;top:1px;width:58px;height:38px;border-radius:3px;border:1px solid #e2e5dc;background:linear-gradient(135deg,#b5b7ab 0,#8f9284 30%,#5e6351 55%,#8a8d7d 80%,#a2a596 100%)"></div>
<svg class="abs" style="left:135px;top:4px" width="31" height="31" viewBox="0 0 31 31"><rect x=".5" y=".5" width="30" height="30" rx="8.500" fill="#4a8cff"/><rect x="6" y="10" width="13.500" height="11" rx="2.200" fill="#fff"/><path d="M20.600 14l4.400-3.200v9.400L20.600 17z" fill="#fff"/></svg>
<!-- telegram button -->
<div class="abs" style="left:184px;top:1px;width:58px;height:38px;border-radius:3px;border:1px solid #a4ab9b;background:linear-gradient(135deg,#a3a699 0,#6b6f60 22%,#2b3024 50%,#3b4132 75%,#5a5f4e 100%)"></div>
<svg class="abs" style="left:198px;top:5px" width="30" height="30" viewBox="0 0 30 30"><circle cx="15" cy="15" r="14.200" fill="#2397d6"/><path d="M5.500 14.600L23 7.600 20.200 22.400 14.500 18.200 12.200 21.200 11.600 16.900z" fill="#fff"/><path d="M11.600 16.900L21 9.600 14.500 18.200 12.200 21.200z" fill="#c9dcea"/></svg>
<!-- media player -->
<svg class="abs" style="left:259px;top:8px" width="30" height="30" viewBox="0 0 30 30"><path d="M6 3L27 1V25L6 27z" fill="#a6d2f0"/><path d="M4 3.500L24 2V26L4 27z" fill="#7fbde8"/><path d="M2 4L21 3V26L2 26.500z" fill="#5aa5dc"/><circle cx="12.500" cy="14.500" r="8.300" fill="#f07f1c"/><path d="M9.500 9.500L18 14.500 9.500 19.500z" fill="#fff"/></svg>
<!-- yandex -->
<svg class="abs" style="left:321px;top:4px" width="32" height="32" viewBox="0 0 32 32"><circle cx="16" cy="16" r="15.200" fill="#f2f0f0"/><path d="M9 8.500L16 16.500 23 8.500M16 16v10" fill="none" stroke="#e01a2b" stroke-width="3.200" stroke-linecap="round"/></svg>
<!-- chrome -->
<svg class="abs" style="left:383px;top:4px" width="32" height="32" viewBox="0 0 32 32"><circle cx="16" cy="16" r="15" fill="#fbc116"/><path d="M16 16L3 8.500A15 15 0 0 0 9.500 29.500z" fill="#2ba24c"/><path d="M16 16L3 8.500A15 15 0 0 1 29.800 10H16z" fill="#e04a3b"/><path d="M16 16L9.500 29.500 8 28 3 8.500z" fill="#2ba24c"/><circle cx="16" cy="16" r="6.800" fill="#f3f3f3"/><circle cx="16" cy="16" r="5.300" fill="#4a87ea"/></svg>
<!-- opera -->
<svg class="abs" style="left:445px;top:4px" width="32" height="32" viewBox="0 0 32 32"><ellipse cx="16" cy="16" rx="15.200" ry="15" fill="#e31b2e"/><ellipse cx="16" cy="16" rx="6.300" ry="11" fill="#0a1406"/><path d="M22.500 4a13 13 0 0 1 0 24a15 15 0 0 0 0-24z" fill="#a80f1e" opacity=".6"/></svg>
<!-- photoshop button -->
<div class="abs" style="left:494px;top:1px;width:58px;height:38px;border-radius:3px;border:1px solid #a4ab9b;background:linear-gradient(100deg,#9c9f90 0,#7d8171 18%,#4f5544 45%,#2c3326 70%,#3a4132 100%)"></div>
<div class="abs" style="left:508px;top:5px;width:30px;height:29px;background:#17105c;border:2px solid #a6cbf4"></div>
<div class="abs" id="ps" style="left:514px;top:8px;font-size:18px;line-height:22px;font-weight:bold;color:#b4d2fa;letter-spacing:-.5px;transform:scaleX(.74);transform-origin:0 0">Ps</div>
<!-- tray -->
<div class="abs" id="tr" style="left:1146px;top:11px;font-size:12px;line-height:14px;color:#fff">TR</div>
<svg class="abs" style="left:1178px;top:19px" width="9" height="5" viewBox="0 0 9 5"><path d="M0 5L4.500 .5 9 5z" fill="#fff"/></svg>
<svg class="abs" style="left:1198px;top:12px" width="16" height="18" viewBox="0 0 16 18"><rect x="1" y="3" width="8" height="13" rx="1" fill="none" stroke="#fff" stroke-width="1.600"/><rect x="3.500" y="1" width="3" height="2" fill="#fff"/><path d="M8 6h7v4.500q0 2-2 2h-1V15h-1.500v-2.500h-.5q-2 0-2-2z" fill="#fff" stroke="#0a1406" stroke-width=".8"/><path d="M9.700 3v3M13.300 3v3" stroke="#fff" stroke-width="1.300"/></svg>
<svg class="abs" style="left:1223px;top:14px" width="15" height="12" viewBox="0 0 15 12" fill="#fff"><rect x="0" y="10" width="2" height="2"/><rect x="3" y="8" width="2.200" height="4"/><rect x="6.200" y="5.500" width="2.200" height="6.500"/><rect x="9.400" y="3" width="2.200" height="9"/><rect x="12.600" y="0" width="2.200" height="12"/></svg>
<svg class="abs" style="left:1246px;top:14px" width="16" height="14" viewBox="0 0 16 14"><path d="M.5 4.500h2.500L7 1v12L3 9.500H.5z" fill="#fff"/><path d="M9 4.800q1.300 2.200 0 4.400" fill="none" stroke="#fff" stroke-width="1.200"/><path d="M11.300 2.800q2.500 4.200 0 8.400" fill="none" stroke="#e8e8e8" stroke-width="1.100"/><path d="M13.500 1.600q3 5.400 0 10.800" fill="none" stroke="#9aa39a" stroke-width=".9"/></svg>
<div class="abs" id="clk" style="left:1293px;top:6px;letter-spacing:-.7px;font-size:12px;line-height:14px;color:#fff">21:16</div>
<div class="abs" id="dat" style="left:1279px;top:23px;letter-spacing:-.75px;font-size:12px;line-height:14px;color:#fff">07.05.2021</div>
<div class="abs" style="left:1345px;top:1px;width:1px;height:39px;background:#081005"></div><div class="abs" style="left:1346px;top:1px;width:14px;height:38px;border:1px solid #8f9a8a;background:linear-gradient(180deg,#4e564b 0,#2d352a 18%,#111a0f 38%,#0b1309 100%)"></div>
</div>

</div>
</body>
</html>
